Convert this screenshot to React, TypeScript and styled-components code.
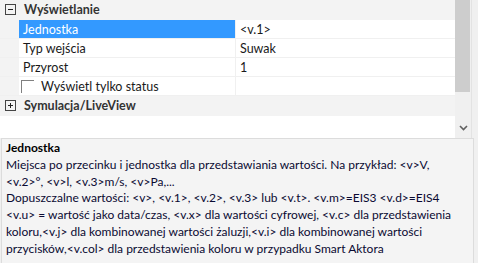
import React from 'react';
import styled, { createGlobalStyle } from 'styled-components';

const GlobalStyle = createGlobalStyle`
  html, body {
    margin: 0;
    padding: 0;
    background: #f0f0f0;
  }
  body {
    font-family: Lato, 'Noto Sans', sans-serif;
    font-size: 12px;
    color: #000;
  }
`;

const Window = styled.div`
  width: 478px;
  height: 263px;
  display: flex;
  flex-direction: column;
  background: #f0f0f0;
  overflow: hidden;
`;

const GridArea = styled.div`
  height: 138px;
  flex-shrink: 0;
  display: flex;
`;

const Grid = styled.div`
  width: 456px;
  display: flex;
  flex-direction: column;
  background: #fff;
`;

const CategoryRow = styled.div`
  height: 19px;
  flex-shrink: 0;
  display: flex;
  align-items: center;
  background: #f3f3f3;
  border-bottom: 1px solid #f3f3f3;
`;

const ExpandBox = styled.span<{ $open?: boolean }>`
  width: 9px;
  height: 9px;
  margin: 0 8px 0 5px;
  border: 1px solid #444;
  position: relative;

  &:before {
    content: '';
    position: absolute;
    left: 2px;
    top: 4px;
    width: 5px;
    height: 1px;
    background: #222;
  }
  &:after {
    content: '';
    display: ${p => (p.$open ? 'none' : 'block')};
    position: absolute;
    left: 4px;
    top: 2px;
    width: 1px;
    height: 5px;
    background: #222;
  }
`;

const CategoryLabel = styled.span`
  font-weight: 700;
  font-size: 12.5px;
  color: #333;
`;

const PropRow = styled.div`
  height: 18px;
  flex-shrink: 0;
  display: grid;
  grid-template-columns: 19px 217px 1fr;
  border-bottom: 1px solid #f0f0f0;
`;

const Gutter = styled.div`
  background: #f3f3f3;
`;

const NameCell = styled.div<{ $selected?: boolean }>`
  display: flex;
  align-items: center;
  padding-left: 4px;
  font-size: 12.5px;
  background: ${p => (p.$selected ? '#3399ff' : '#fff')};
  color: ${p => (p.$selected ? '#fff' : '#1a1a1a')};
  border-right: 1px solid #f0f0f0;
  white-space: nowrap;
`;

const ValueCell = styled.div`
  display: flex;
  align-items: center;
  padding-left: 4px;
  font-size: 12.5px;
  color: #1a1a1a;
`;

const CheckCell = styled(NameCell)`
  padding-left: 2px;
  gap: 7px;
`;

const Check = styled.span`
  width: 13px;
  height: 13px;
  flex-shrink: 0;
  box-sizing: border-box;
  border-top: 1px solid #808080;
  border-left: 1px solid #808080;
`;

const Empty = styled.div`
  flex: 1;
  background: #fff;
`;

const ScrollBar = styled.div`
  width: 16px;
  display: flex;
  flex-direction: column;
  background: #f0f0f0;
`;

const Thumb = styled.div`
  height: 92px;
  margin-right: 1px;
  background: #cdcdcd;
`;

const Track = styled.div`
  flex: 1;
  display: flex;
  align-items: flex-end;
  justify-content: center;
  padding-bottom: 7px;
`;

const Edge = styled.div`
  width: 6px;
  background: #f0f0f0;
  border-left: 1px solid #e3e3e3;
`;

const Help = styled.div`
  flex: 1;
  margin: 0 4px 0 1px;
  padding: 1px 4px 0;
  background: #f4f4f4;
  border: 1px solid #dcdcdc;
  border-bottom: none;
  line-height: 16.8px;
  color: #0a0a32;
`;

const HelpTitle = styled.div`
  font-weight: 700;
  color: #000;
`;

const HelpLine = styled.div`
  white-space: nowrap;
`;

const rows = [
  { name: 'Jednostka', value: '<v.1>', selected: true },
  { name: 'Typ wejścia', value: 'Suwak' },
  { name: 'Przyrost', value: '1' },
];

const helpLines = [
  'Miejsca po przecinku i jednostka dla przedstawiania wartości. Na przykład: <v>V,',
  '<v.2>°, <v>l, <v.3>m/s, <v>Pa,...',
  'Dopuszczalne wartości: <v>, <v.1>, <v.2>, <v.3> lub <v.t>. <v.m>=EIS3 <v.d>=EIS4',
  '<v.u> = wartość jako data/czas, <v.x> dla wartości cyfrowej, <v.c> dla przedstawienia',
  'koloru,<v.j> dla kombinowanej wartości żaluzji,<v.i> dla kombinowanej wartości',
  'przycisków,<v.col> dla przedstawienia koloru w przypadku Smart Aktora',
];

export default function App() {
  return (
    <Window>
      <GlobalStyle />
      <GridArea>
        <Grid>
          <CategoryRow>
            <ExpandBox $open />
            <CategoryLabel>Wyświetlanie</CategoryLabel>
          </CategoryRow>
          {rows.map(r => (
            <PropRow key={r.name}>
              <Gutter />
              <NameCell $selected={r.selected}>{r.name}</NameCell>
              <ValueCell>{r.value}</ValueCell>
            </PropRow>
          ))}
          <PropRow>
            <Gutter />
            <CheckCell>
              <Check />
              <span>Wyświetl tylko status</span>
            </CheckCell>
            <ValueCell />
          </PropRow>
          <CategoryRow>
            <ExpandBox />
            <CategoryLabel>Symulacja/LiveView</CategoryLabel>
          </CategoryRow>
          <Empty />
        </Grid>
        <ScrollBar>
          <Thumb />
          <Track>
            <svg width="9" height="6" viewBox="0 0 9 6">
              <path d="M1 1 L4.5 4.5 L8 1" fill="none" stroke="#606060" strokeWidth="1.6" />
            </svg>
          </Track>
        </ScrollBar>
        <Edge />
      </GridArea>
      <Help>
        <HelpTitle>Jednostka</HelpTitle>
        {helpLines.map(l => (
          <HelpLine key={l}>{l}</HelpLine>
        ))}
      </Help>
    </Window>
  );
}
